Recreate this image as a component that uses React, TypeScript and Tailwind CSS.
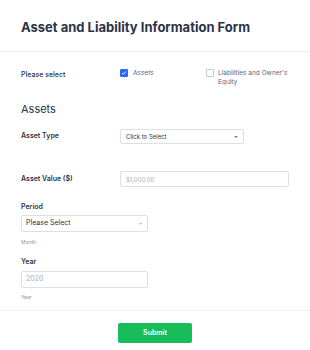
import React from 'react';

// Asset and Liability form (compact)

export default function App() {
  return (
    <div
      className="w-[310px] h-[350px] bg-white overflow-hidden text-[#2c3345]"
      style={{ fontFamily: 'Inter, "Noto Sans", sans-serif' }}
    >
      {/* header */}
      <div className="px-[21px] pt-[17px] pb-[14px] border-b border-[#f3f3f5]">
        <h1 className="text-[13px] leading-[20px] font-bold">Asset and Liability Information Form</h1>
      </div>

      <div className="px-[21px]">
        {/* please select */}
        <div className="flex mt-[17px] text-[7px] leading-[9px]">
          <div className="w-[99px] shrink-0 font-medium pt-[1px]">Please select</div>
          <div className="w-[86px] shrink-0 flex items-start gap-[5px]">
            <span className="w-[8px] h-[8px] shrink-0 rounded-[1px] bg-[#2e69ff] flex items-center justify-center">
              <svg viewBox="0 0 10 10" className="w-[6px] h-[6px]">
                <path d="M2 5.2l2 2 4-4.4" stroke="#fff" strokeWidth="1.5" fill="none" />
              </svg>
            </span>
            <span className="text-[#57647e] text-[6.5px]">Assets</span>
          </div>
          <div className="flex items-start gap-[4px]">
            <span className="w-[8px] h-[8px] rounded-[1px] border border-[#c3cad8] bg-white shrink-0" />
            <span className="w-[76px] text-[#57647e] text-[6.5px]">Liabilities and Owner's Equity</span>
          </div>
        </div>

        {/* section */}
        <div className="mt-[15px] text-[11px] leading-[14px] text-[#2c3345]">Assets</div>

        <div className="flex items-center mt-[13px]">
          <div className="w-[99px] shrink-0 text-[7px] font-semibold">Asset Type</div>
          <div className="w-[124px] h-[15px] border border-[#dedfe3] rounded-[2px] flex items-center justify-between px-[5px] text-[6px]">
            <span>Click to Select</span>
            <span className="w-0 h-0 border-l-[2px] border-r-[2px] border-t-[2px] border-l-transparent border-r-transparent border-t-[#7b8190]" />
          </div>
        </div>

        <div className="flex items-center mt-[27px]">
          <div className="w-[99px] shrink-0 text-[7px] font-semibold">Asset Value ($)</div>
          <div className="w-[172px] h-[16px] border border-[#dedfe3] rounded-[2px] flex items-center px-[5px] text-[6px] text-[#a6acbd]">
            $1,000.00
          </div>
        </div>

        <div className="mt-[15px] text-[7px] font-semibold leading-[10px]">Period</div>
        <div className="mt-[3px] w-[127px] h-[17px] border border-[#dedfe3] rounded-[2px] flex items-center justify-between px-[4px] text-[7px]">
          <span>Please Select</span>
          <svg viewBox="0 0 10 10" className="w-[5px] h-[5px]">
            <path d="M2 3.5l3 3 3-3" stroke="#7b8190" strokeWidth="1.4" fill="none" />
          </svg>
        </div>
        <div className="mt-[7px] text-[5px] leading-[6px] text-[#8f96a3]">Month</div>

        <div className="mt-[12px] text-[7px] font-semibold leading-[10px]">Year</div>
        <div className="mt-[4px] w-[127px] h-[17px] border border-[#dedfe3] rounded-[2px] flex items-center px-[4px] text-[7px] text-[#a6acbd]">
          2020
        </div>
        <div className="mt-[6px] text-[5px] leading-[6px] text-[#8f96a3]">Year</div>
      </div>

      <div className="mt-[10px] border-t border-[#f3f3f5] flex justify-center pt-[12px]">
        <button className="w-[74px] h-[20px] rounded-[2px] bg-[#18bd5b] text-white text-[7px] font-semibold">
          Submit
        </button>
      </div>
    </div>
  );
}
